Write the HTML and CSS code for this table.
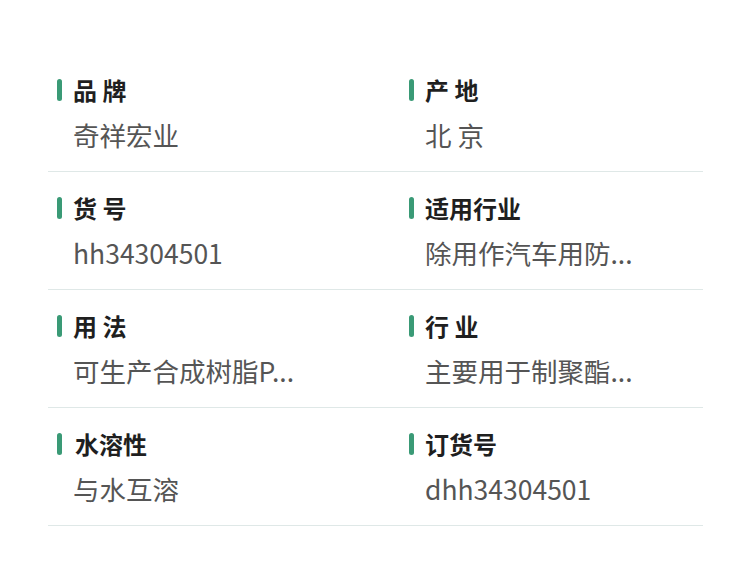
FILE: index.html
```html
<!DOCTYPE html>
<html lang="zh-CN">
<head>
<meta charset="utf-8">
<title>参数</title>
<link rel="stylesheet" href="styles.css">
</head>
<body>
<div class="list">
  <div class="row">
    <div class="cell"><div class="title">品 牌</div><div class="value">奇祥宏业</div></div>
    <div class="cell"><div class="title">产 地</div><div class="value">北 京</div></div>
  </div>
  <div class="row">
    <div class="cell"><div class="title">货 号</div><div class="value">hh34304501</div></div>
    <div class="cell"><div class="title">适用行业</div><div class="value">除用作汽车用防...</div></div>
  </div>
  <div class="row">
    <div class="cell"><div class="title">用 法</div><div class="value">可生产合成树脂P...</div></div>
    <div class="cell"><div class="title">行 业</div><div class="value">主要用于制聚酯...</div></div>
  </div>
  <div class="row">
    <div class="cell"><div class="title title-wide">水溶性</div><div class="value">与水互溶</div></div>
    <div class="cell"><div class="title">订货号</div><div class="value">dhh34304501</div></div>
  </div>
</div>
</body>
</html>
```

FILE: styles.css
```css
html, body {
  margin: 0;
  padding: 0;
  background: #ffffff;
}

body {
  font-family: "Noto Sans CJK SC", "Noto Sans", sans-serif;
}

.list {
  padding: 54px 47px 0 48px;
}

.row {
  display: grid;
  grid-template-columns: 352px 1fr;
  border-bottom: 1px solid #dfe8e7;
}

.cell {
  padding: 20px 0 18px 9px;
  display: flex;
  flex-direction: column;
  gap: 11px;
}

.title {
  display: flex;
  align-items: center;
  gap: 11px;
  font-size: 24px;
  line-height: 32px;
  font-weight: 700;
  color: #1f1f1f;
}

.title::before {
  content: "";
  width: 5px;
  height: 22px;
  border-radius: 3px;
  background: #3a9a76;
  flex: none;
}

.title-wide {
  gap: 13px;
}

.value {
  padding-left: 16px;
  font-size: 26.5px;
  line-height: 36px;
  color: #555555;
  white-space: nowrap;
}
```
